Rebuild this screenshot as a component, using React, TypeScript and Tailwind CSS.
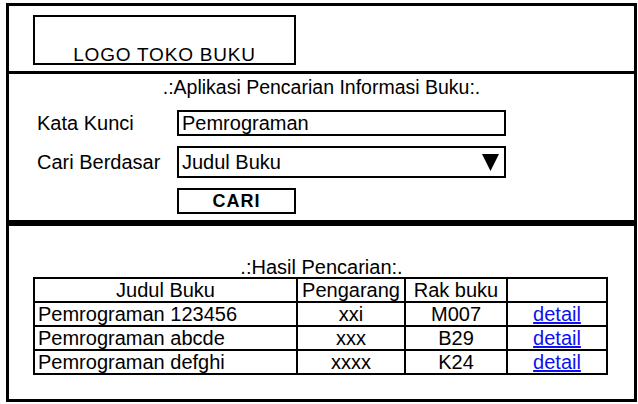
import React from 'react';

type Book = {
  title: string;
  author: string;
  shelf: string;
};

const books: Book[] = [
  { title: 'Pemrograman 123456', author: 'xxi', shelf: 'M007' },
  { title: 'Pemrograman abcde', author: 'xxx', shelf: 'B29' },
  { title: 'Pemrograman defghi', author: 'xxxx', shelf: 'K24' },
];

function SearchForm() {
  return (
    <div className="h-[152px] shrink-0 border-b-[6px] border-black pt-[2px]">
      <div className="text-center text-[19.5px] leading-[22px]">.:Aplikasi Pencarian Informasi Buku:.</div>

      <div className="mt-[12px] flex flex-col gap-[10px] pl-[28px]">
        {/* Kata kunci */}
        <div className="flex items-center">
          <span className="w-[140px] text-[20px] leading-[22px]">Kata Kunci</span>
          <div className="w-[329px] h-[26px] border-2 border-black pl-[3px] text-[20px] leading-[22px]">
            Pemrograman
          </div>
        </div>

        {/* Cari berdasar */}
        <div className="flex items-center">
          <span className="w-[140px] text-[20px] leading-[22px]">Cari Berdasar</span>
          <div className="w-[329px] h-[32px] border-2 border-black pl-[3px] pr-[5px] flex items-center justify-between text-[20px] leading-[22px]">
            <span>Judul Buku</span>
            <svg width="17" height="17" viewBox="0 0 17 17">
              <path d="M0 0H17L8.5 17Z" fill="#000" />
            </svg>
          </div>
        </div>

        <div className="flex">
          <div className="ml-[140px] w-[119px] h-[26px] border-2 border-black text-center font-bold text-[18px] leading-[22px] tracking-[1px]">
            CARI
          </div>
        </div>
      </div>
    </div>
  );
}

function ResultTable() {
  const cell = 'border-2 border-black h-[24px] p-0 text-[20px] leading-[22px]';
  return (
    <div className="pt-[31px]">
      <div className="text-center text-[20px] leading-[20px]">.:Hasil Pencarian:.</div>
      <table className="ml-[24px] w-[573px] border-collapse table-fixed">
        <colgroup>
          <col className="w-[263px]" />
          <col className="w-[108px]" />
          <col className="w-[102px]" />
          <col className="w-[100px]" />
        </colgroup>
        <thead>
          <tr>
            <th className={`${cell} font-normal text-center`}>Judul Buku</th>
            <th className={`${cell} font-normal text-center`}>Pengarang</th>
            <th className={`${cell} font-normal text-center`}>Rak buku</th>
            <th className={cell}></th>
          </tr>
        </thead>
        <tbody>
          {books.map((b) => (
            <tr key={b.title}>
              <td className={`${cell} pl-[3px]`}>{b.title}</td>
              <td className={`${cell} text-center`}>{b.author}</td>
              <td className={`${cell} text-center`}>{b.shelf}</td>
              <td className={`${cell} text-center`}>
                <a href="#" className="text-[#1010f0] underline">
                  detail
                </a>
              </td>
            </tr>
          ))}
        </tbody>
      </table>
    </div>
  );
}

export default function App() {
  return (
    <div className="w-[638px] h-[404px] bg-white pl-[6px] pt-[3px] text-black font-['Liberation_Sans',Arial,sans-serif]">
      <div className="w-[631px] h-[399px] border-[3px] border-black flex flex-col">
        {/* Logo area */}
        <div className="h-[68px] shrink-0 border-b-[3px] border-black pt-[9px] pl-[24px]">
          <div className="w-[263px] h-[50px] border-2 border-black text-center text-[19px] leading-[20px] tracking-[0.8px] pt-[28px]">
            LOGO TOKO BUKU
          </div>
        </div>

        <SearchForm />
        <ResultTable />
      </div>
    </div>
  );
}
